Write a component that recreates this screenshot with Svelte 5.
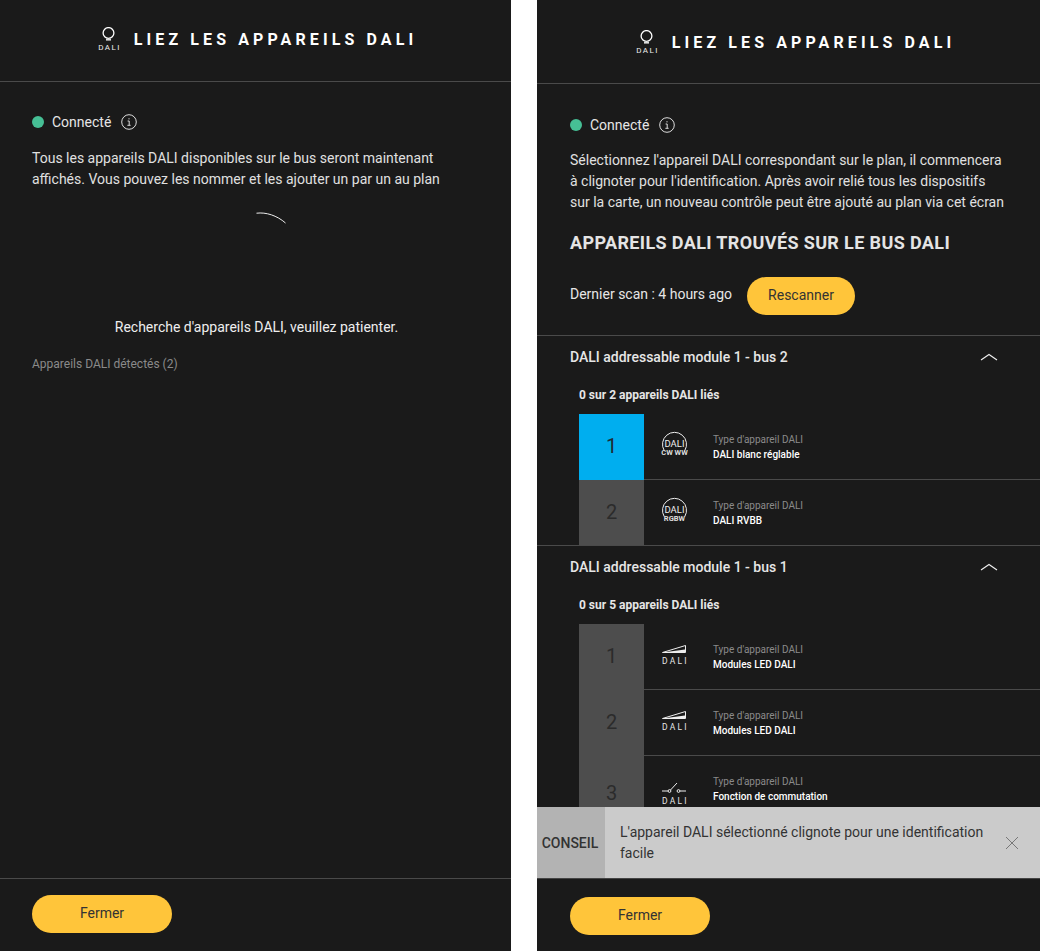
<script>
	const buses = [
		{
			name: 'DALI addressable module 1 - bus 2',
			linked: '0 sur 2 appareils DALI liés',
			devices: [
				{ nr: 1, icon: 'circle', sub: 'CW WW', label: 'DALI blanc réglable', active: true },
				{ nr: 2, icon: 'circle', sub: 'RGBW', label: 'DALI RVBB' }
			]
		},
		{
			name: 'DALI addressable module 1 - bus 1',
			linked: '0 sur 5 appareils DALI liés',
			devices: [
				{ nr: 1, icon: 'ramp', label: 'Modules LED DALI' },
				{ nr: 2, icon: 'ramp', label: 'Modules LED DALI' },
				{ nr: 3, icon: 'switch', label: 'Fonction de commutation' }
			]
		}
	];
</script>

{#snippet title(cls)}
	<header class="head {cls}">
		<svg class="bulb" width="22" height="24" viewBox="0 0 22 24" fill="none">
			<circle cx="10.5" cy="6" r="5.4" stroke="#fff" stroke-width="1.3" />
			<path d="M8 12.6h5" stroke="#ddd" stroke-width="2" />
			<text x="11.6" y="22.5" class="bulb-text">DALI</text>
		</svg>
		<h1>LIEZ LES APPAREILS DALI</h1>
	</header>
{/snippet}

{#snippet status()}
	<div class="status">
		<span class="dot"></span>
		<span>Connecté</span>
		<svg width="16" height="16" viewBox="0 0 16 16" fill="none">
			<circle cx="8" cy="8" r="7.3" stroke="#ddd" />
			<path d="M6.6 7h1.6v4.2M6.4 11.3h3.2M8 4.2v1.2" stroke="#ddd" />
		</svg>
	</div>
{/snippet}

{#snippet deviceIcon(d)}
	<svg class="dev-icon" width="28" height="36" viewBox="0 0 28 36" fill="none">
		{#if d.icon === 'circle'}
			<path d="M4.2 20.5A12 12 0 1 1 24.8 20.5" stroke="#eee" />
			<text x="14.5" y="16.6" class="ic-main">DALI</text>
			<text x="14.5" y="25" class="ic-sub">{d.sub}</text>
		{:else if d.icon === 'ramp'}
			<path d="M2.5 12.5L25.5 5.5V12.5Z" stroke="#eee" />
			<path d="M2.5 12.5L25 9.5V12.5Z" fill="#eee" />
			<text x="15.4" y="24" class="ic-dali">DALI</text>
		{:else}
			<path d="M2 19h6M20 19h6M10.5 18L17 11" stroke="#eee" />
			<circle cx="9.5" cy="19" r="1.4" stroke="#eee" />
			<circle cx="18.5" cy="19" r="1.4" stroke="#eee" />
			<text x="15.4" y="32" class="ic-dali">DALI</text>
		{/if}
	</svg>
{/snippet}

<div class="page">
	<section class="panel left">
		{@render title('head-left')}
		<div class="body">
			{@render status()}
			<p class="intro">
				Tous les appareils DALI disponibles sur le bus seront maintenant<br />affichés. Vous pouvez
				les nommer et les ajouter un par un au plan
			</p>
			<div class="spinner">
				<svg width="30" height="12" viewBox="0 0 30 12" fill="none">
					<path d="M0.5 1.2C10 0 21 3.5 29.5 11" stroke="#eee" />
				</svg>
			</div>
			<p class="searching">Recherche d'appareils DALI, veuillez patienter.</p>
			<p class="found">Appareils DALI détectés (2)</p>
		</div>
		<footer class="foot">
			<button class="btn close">Fermer</button>
		</footer>
	</section>

	<section class="panel right">
		{@render title('head-right')}
		<div class="scroll">
			<div class="top">
				{@render status()}
				<p class="intro">
					Sélectionnez l'appareil DALI correspondant sur le plan, il commencera<br />à clignoter pour
					l'identification. Après avoir relié tous les dispositifs<br />sur la carte, un nouveau contrôle
					peut être ajouté au plan via cet écran
				</p>
				<h2>APPAREILS DALI TROUVÉS SUR LE BUS DALI</h2>
				<div class="scan">
					<span>Dernier scan : 4 hours ago</span>
					<button class="btn rescan">Rescanner</button>
				</div>
			</div>

			{#each buses as bus}
				<div class="bus">
					<div class="bus-head">
						<span>{bus.name}</span>
						<svg width="18" height="8" viewBox="0 0 18 8" fill="none">
							<path d="M1 7L9 1.5L17 7" stroke="#eee" stroke-width="1.2" />
						</svg>
					</div>
					<div class="linked">{bus.linked}</div>
					{#each bus.devices as d}
						<div class="device" class:tall={d.icon === 'switch'}>
							<div class="nr" class:active={d.active}>{d.nr}</div>
							<div class="info">
								{@render deviceIcon(d)}
								<div class="texts">
									<div class="type">Type d'appareil DALI</div>
									<div class="label">{d.label}</div>
								</div>
							</div>
						</div>
					{/each}
				</div>
			{/each}

			<div class="toast">
				<div class="toast-tag">CONSEIL</div>
				<div class="toast-msg">L'appareil DALI sélectionné clignote pour une identification facile</div>
				<svg class="toast-x" width="14" height="14" viewBox="0 0 14 14" fill="none">
					<path d="M1 1L13 13M13 1L1 13" stroke="#777" />
				</svg>
			</div>
		</div>
		<footer class="foot foot-right">
			<button class="btn close">Fermer</button>
		</footer>
	</section>
</div>

<style>
	:global(body) {
		background: #fff;
	}

	.page {
		display: flex;
		justify-content: space-between;
		width: 1040px;
		height: 951px;
		font-family: Roboto, 'Liberation Sans', sans-serif;
		color: #e6e6e6;
		font-size: 14px;
	}

	.panel {
		background: #1a1a1a;
		display: flex;
		flex-direction: column;
		height: 951px;
	}

	.left {
		width: 511px;
	}

	.right {
		width: 503px;
	}

	/* Header */
	.head {
		flex: none;
		box-sizing: border-box;
		border-bottom: 1px solid #4a4a4a;
		display: flex;
		align-items: center;
		justify-content: center;
		gap: 14px;
	}

	.head-left {
		height: 82px;
		padding: 0 0 4px 4px;
	}

	.head-right {
		height: 84px;
		padding: 0 0 0 14px;
	}

	.bulb-text {
		font-size: 8px;
		letter-spacing: 1.5px;
		fill: #eee;
		text-anchor: middle;
	}

	.head h1 {
		margin: 2px 0 0;
		font-size: 16px;
		font-weight: 700;
		letter-spacing: 4.1px;
		color: #fff;
	}

	/* Body */
	.body {
		flex: 1;
		padding: 30px 32px 0;
	}

	.status {
		display: flex;
		align-items: center;
		height: 20px;
		gap: 8px;
	}

	.status svg {
		margin-left: 2px;
	}

	.dot {
		width: 12px;
		height: 12px;
		border-radius: 50%;
		background: #46bf95;
	}

	.intro {
		margin: 15px 0 0;
		line-height: 21px;
		color: #e0e0e0;
	}

	.left .intro {
		margin-top: 16px;
	}

	.spinner {
		display: flex;
		justify-content: center;
		margin-top: 22px;
		padding-left: 31px;
		height: 12px;
	}

	.spinner svg {
		display: block;
	}

	.searching {
		margin: 93px 0 0;
		padding-left: 2px;
		text-align: center;
		line-height: 20px;
		color: #eee;
	}

	.found {
		margin: 17px 0 0;
		font-size: 12px;
		line-height: 20px;
		color: #8a8a8a;
	}

	.foot {
		height: 73px;
		flex: none;
		box-sizing: border-box;
		border-top: 1px solid #4a4a4a;
		padding: 16px 32px 0;
	}

	.foot-right {
		height: 72px;
		border-top: 0;
		padding-top: 18px;
		padding-left: 33px;
	}

	.btn {
		border: 0;
		background: #ffc53a;
		color: #333;
		font-family: inherit;
		font-size: 14px;
		height: 38px;
		border-radius: 19px;
		padding: 0 0 2px;
	}

	.close {
		width: 140px;
	}

	.rescan {
		width: 108px;
	}

	/* Right column */
	.scroll {
		flex: 1;
		overflow: hidden;
		position: relative;
		min-height: 0;
	}

	.top {
		padding: 31px 33px 0;
		height: 251px;
		box-sizing: border-box;
	}

	.top h2 {
		margin: 18px 0 0;
		font-size: 18px;
		line-height: 24px;
		font-weight: 700;
		letter-spacing: 0.37px;
		color: #e4e4e4;
	}

	.scan {
		display: flex;
		align-items: center;
		gap: 15px;
		margin-top: 22px;
	}

	.scan span {
		position: relative;
		top: -2px;
	}

	.bus {
		border-top: 1px solid #4a4a4a;
	}

	.bus-head {
		display: flex;
		justify-content: space-between;
		align-items: center;
		height: 43px;
		box-sizing: border-box;
		padding: 0 42px 2px 33px;
		font-weight: 500;
		color: #e6e6e6;
	}

	.linked {
		margin: 0 0 0 42px;
		height: 35px;
		line-height: 16px;
		padding-top: 8px;
		box-sizing: border-box;
		font-size: 12px;
		font-weight: 700;
		color: #e6e6e6;
	}

	.device {
		display: flex;
		height: 66px;
		margin-left: 42px;
	}

	.device:last-child {
		height: 65px;
	}

	.device.tall {
		height: 76px;
	}

	.nr {
		width: 65px;
		flex: none;
		background: #4d4d4d;
		color: #2b2b2b;
		font-size: 20px;
		font-weight: 400;
		display: flex;
		align-items: center;
		justify-content: center;
		padding-bottom: 2px;
		box-sizing: border-box;
	}

	.nr.active {
		background: #00aeef;
		color: #1f2a33;
	}

	.info {
		flex: 1;
		display: flex;
		align-items: flex-start;
		border-bottom: 1px solid #4a4a4a;
		padding: 16px 0 0 16px;
	}

	.device:last-child .info {
		border-bottom: 0;
	}

	.dev-icon {
		flex: none;
	}

	.ic-main {
		font-size: 9.5px;
		fill: #eee;
		text-anchor: middle;
	}

	.ic-sub {
		font-size: 7.5px;
		font-weight: 700;
		fill: #ddd;
		text-anchor: middle;
	}

	.ic-dali {
		font-size: 8.5px;
		letter-spacing: 2.2px;
		fill: #e6e6e6;
		text-anchor: middle;
	}

	.texts {
		margin-left: 25px;
		font-size: 10px;
		line-height: 15px;
		margin-top: 2px;
	}

	.type {
		color: #8a8a8a;
	}

	.label {
		color: #fff;
		font-weight: 500;
	}

	/* Toast */
	.toast {
		position: absolute;
		left: 0;
		right: 0;
		bottom: 0;
		height: 72px;
		display: flex;
		align-items: stretch;
		background: #cbcbcb;
		border-bottom: 1px solid #444;
		box-sizing: border-box;
		color: #333;
	}

	.toast-tag {
		width: 68px;
		flex: none;
		box-sizing: border-box;
		padding-right: 2px;
		background: #b3b3b3;
		display: flex;
		align-items: center;
		justify-content: center;
		font-weight: 500;
	}

	.toast-msg {
		flex: 1;
		padding: 15px 20px 0 15px;
		line-height: 21px;
	}

	.toast-x {
		flex: none;
		align-self: center;
		margin-right: 21px;
	}
</style>
